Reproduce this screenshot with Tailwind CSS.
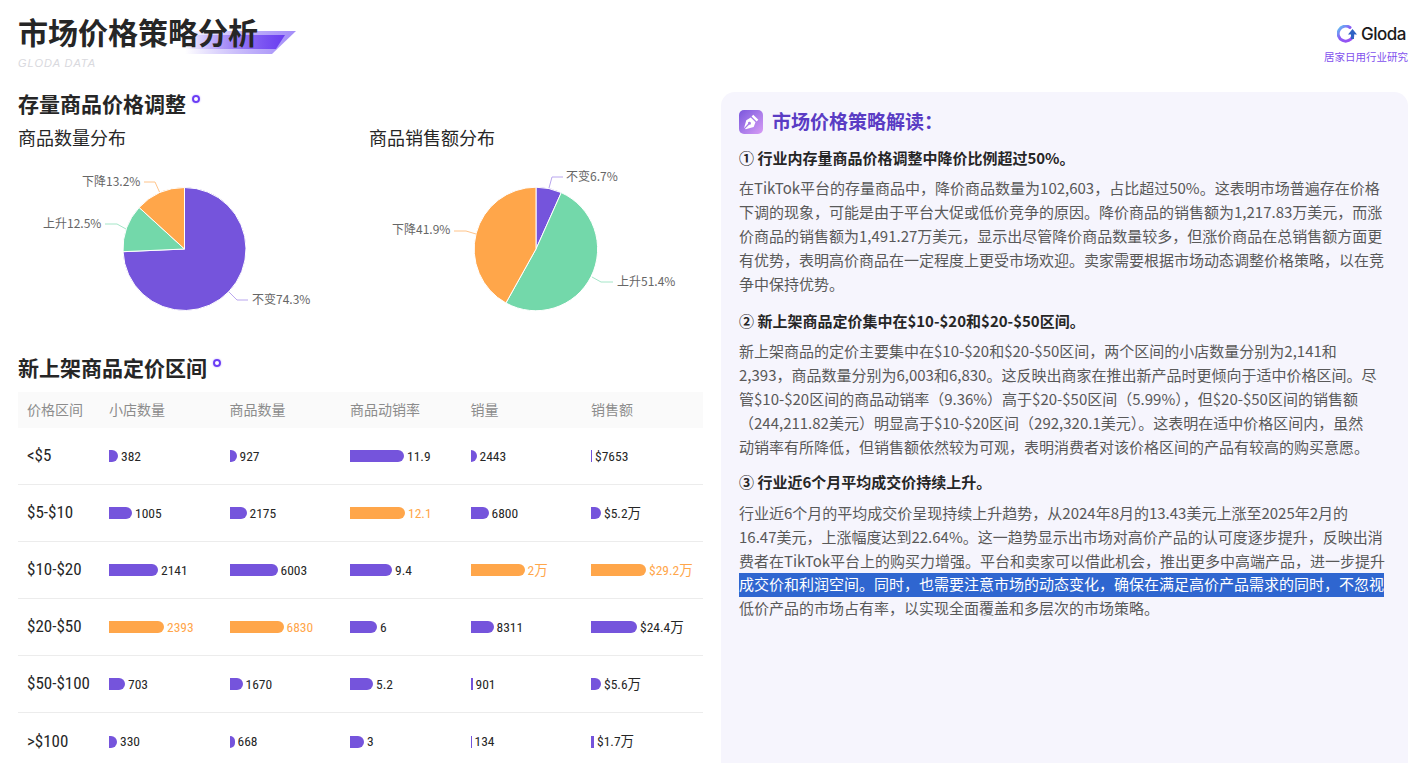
<!DOCTYPE html>
<html lang="zh-CN">
<head>
    <meta charset="UTF-8">
    <title>市场价格策略分析</title>
    <script src="https://cdn.jsdelivr.net/npm/@tailwindcss/browser@4"></script>
</head>
<body class="bg-white">
<div class="w-[1423px] h-[763px] overflow-hidden font-['Noto_Sans_CJK_SC','Noto_Sans',sans-serif] text-[#262626]">
    <!-- header -->
    <header class="h-[92px] pl-[18px] pr-[15px] flex justify-between">
        <div class="relative w-[300px]">
            <svg class="absolute left-[142px] top-[28px]" width="140" height="30" viewBox="160 28 140 30">
                <defs>
                    <linearGradient id="ribbonBack" x1="0" x2="1" y1="0" y2="0">
                        <stop offset="0" stop-color="#7b5cf5" stop-opacity="0"/>
                        <stop offset="1" stop-color="#a48df8"/>
                    </linearGradient>
                    <linearGradient id="ribbonFront" x1="0" x2="1" y1="0" y2="0">
                        <stop offset="0" stop-color="#6a3df0" stop-opacity="0"/>
                        <stop offset="1" stop-color="#6a3df0"/>
                    </linearGradient>
                </defs>
                <polygon points="185,31 296,31 272,54 185,54" fill="url(#ribbonBack)"/>
                <polygon points="185,35 285,35 276,49 185,49" fill="url(#ribbonFront)"/>
            </svg>
            <h1 class="relative pt-[12px] text-[30px] leading-[38px] font-bold tracking-normal">市场价格策略分析</h1>
            <p class="relative mt-[5px] text-[11px] leading-[16px] italic tracking-[0.9px] text-[#d9d9de] font-['Liberation_Sans',sans-serif]">GLODA DATA</p>
        </div>
        <div class="pt-[23px] flex flex-col items-end">
            <div class="flex items-center gap-[4px] h-[24px] pr-[2px]">
                <svg width="20" height="20" viewBox="0 0 20 20">
                    <defs>
                        <linearGradient id="logoRing" x1="0" x2="1" y1="0" y2="1">
                            <stop offset="0" stop-color="#5cc8f0"/>
                            <stop offset="0.45" stop-color="#8a5cf6"/>
                            <stop offset="1" stop-color="#9b4df0"/>
                        </linearGradient>
                    </defs>
                    <path d="M13 2.500A7.500 7.500 0 1 0 15.800 11" fill="none" stroke="url(#logoRing)" stroke-width="3" stroke-linecap="round"/>
                    <path d="M15.500 4L11 9.500h3v4.500h3V9.500h3z" fill="#2f62c4"/>
                </svg>
                <span class="font-['Inter',sans-serif] text-[17px] font-medium tracking-[-0.5px] text-[#1a1a1a]">Gloda</span>
            </div>
            <p class="mt-[2px] text-[10.5px] leading-[16px] text-[#7f50ee]">居家日用行业研究</p>
        </div>
    </header>

    <main class="flex gap-[18px]">
        <!-- left column -->
        <section class="w-[685px] ml-[18px] shrink-0">
            <div class="flex items-start gap-[6px] h-[24px]">
                <h2 class="-mt-px text-[21px] leading-[24px] font-bold">存量商品价格调整</h2>
                <span class="mt-[3px] size-[8px] rounded-full border-2 border-[#6b3df5] shadow-[0_0_2px_#b9a6fb]"></span>
            </div>
            <div class="flex">
                <div class="w-[351px]">
                    <h3 class="mt-[9px] text-[18px] leading-[24px]">商品数量分布</h3>
                    <svg class="mt-[6px] block" width="351" height="185" viewBox="18 155 351 185" font-size="12" fill="#666">
                        <path d="M184.500 249L184.500 187.500A61.500 61.500 0 1 1 123.060 251.700Z" fill="#7554dc" stroke="#fff"/>
                        <path d="M184.500 249L123.060 251.700A61.500 61.500 0 0 1 139.140 207.480Z" fill="#73d8aa" stroke="#fff"/>
                        <path d="M184.500 249L139.140 207.480A61.500 61.500 0 0 1 184.500 187.500Z" fill="#ffa64a" stroke="#fff"/>
                        <polyline points="144,182 155,182 159.500,192" fill="none" stroke="#ffc48a"/>
                        <polyline points="105,224 117,224 126,229" fill="none" stroke="#a5e6c8"/>
                        <polyline points="229,292 237,300 248,300" fill="none" stroke="#b9a6ee"/>
                        <text x="82" y="186">下降13.2%</text>
                        <text x="43" y="228">上升12.5%</text>
                        <text x="252" y="304">不变74.3%</text>
                    </svg>
                </div>
                <div class="w-[334px]">
                    <h3 class="mt-[9px] text-[18px] leading-[24px]">商品销售额分布</h3>
                    <svg class="mt-[6px] block" width="334" height="185" viewBox="369 155 334 185" font-size="12" fill="#666">
                        <path d="M536 249L536 187.200A61.800 61.800 0 0 1 561.250 192.600Z" fill="#7554dc" stroke="#fff"/>
                        <path d="M536 249L561.250 192.600A61.800 61.800 0 1 1 505.900 303Z" fill="#73d8aa" stroke="#fff"/>
                        <path d="M536 249L505.900 303A61.800 61.800 0 0 1 536 187.200Z" fill="#ffa64a" stroke="#fff"/>
                        <polyline points="563,177 552,177 549,188" fill="none" stroke="#b9a6ee"/>
                        <polyline points="454,231 466,231 476,234" fill="none" stroke="#ffc48a"/>
                        <polyline points="592,277 601,282 613,282" fill="none" stroke="#a5e6c8"/>
                        <text x="566" y="181">不变6.7%</text>
                        <text x="392" y="234">下降41.9%</text>
                        <text x="617" y="286">上升51.4%</text>
                    </svg>
                </div>
            </div>

            <div class="mt-[16px] flex items-start gap-[6px] h-[24px]">
                <h2 class="-mt-px text-[21px] leading-[24px] font-bold">新上架商品定价区间</h2>
                <span class="mt-[3px] size-[8px] rounded-full border-2 border-[#6b3df5] shadow-[0_0_2px_#b9a6fb]"></span>
            </div>

            <!-- price table -->
            <div class="mt-[12px] text-[13.5px] font-['Roboto_Condensed','Noto_Sans_CJK_SC',sans-serif] font-normal">
                <div class="grid grid-cols-[91px_repeat(4,120.5px)_1fr] h-[36px] pb-[2px] items-center bg-[#fafafa] text-[14px] text-[#8c8c8c] font-['Noto_Sans_CJK_SC',sans-serif]">
                    <div class="pl-[9px]">价格区间</div><div>小店数量</div><div>商品数量</div><div>商品动销率</div><div>销量</div><div>销售额</div>
                </div>
                <div class="grid grid-cols-[91px_repeat(4,120.5px)_1fr] h-[57px] items-center border-b border-[#ececec]">
                    <div class="pl-[9px] text-[17px]">&lt;$5</div>
                    <div class="flex items-center gap-[3px]"><span class="w-[9px] h-[12px] rounded-r-full bg-[#7554dc]"></span>382</div>
                    <div class="flex items-center gap-[3px]"><span class="w-[7px] h-[12px] rounded-r-full bg-[#7554dc]"></span>927</div>
                    <div class="flex items-center gap-[3px]"><span class="w-[54px] h-[12px] rounded-r-full bg-[#7554dc]"></span>11.9</div>
                    <div class="flex items-center gap-[3px]"><span class="w-[6px] h-[12px] rounded-r-full bg-[#7554dc]"></span>2443</div>
                    <div class="flex items-center gap-[3px]"><span class="w-[1px] h-[12px] bg-[#7554dc]"></span>$7653</div>
                </div>
                <div class="grid grid-cols-[91px_repeat(4,120.5px)_1fr] h-[57px] items-center border-b border-[#ececec]">
                    <div class="pl-[9px] text-[17px]">$5-$10</div>
                    <div class="flex items-center gap-[3px]"><span class="w-[23px] h-[12px] rounded-r-full bg-[#7554dc]"></span>1005</div>
                    <div class="flex items-center gap-[3px]"><span class="w-[17px] h-[12px] rounded-r-full bg-[#7554dc]"></span>2175</div>
                    <div class="flex items-center gap-[3px] text-[#ffa64a]"><span class="w-[55px] h-[12px] rounded-r-full bg-[#ffa64a]"></span>12.1</div>
                    <div class="flex items-center gap-[3px]"><span class="w-[18px] h-[12px] rounded-r-full bg-[#7554dc]"></span>6800</div>
                    <div class="flex items-center gap-[3px]"><span class="w-[10px] h-[12px] rounded-r-full bg-[#7554dc]"></span>$5.2万</div>
                </div>
                <div class="grid grid-cols-[91px_repeat(4,120.5px)_1fr] h-[57px] items-center border-b border-[#ececec]">
                    <div class="pl-[9px] text-[17px]">$10-$20</div>
                    <div class="flex items-center gap-[3px]"><span class="w-[49px] h-[12px] rounded-r-full bg-[#7554dc]"></span>2141</div>
                    <div class="flex items-center gap-[3px]"><span class="w-[48px] h-[12px] rounded-r-full bg-[#7554dc]"></span>6003</div>
                    <div class="flex items-center gap-[3px]"><span class="w-[42px] h-[12px] rounded-r-full bg-[#7554dc]"></span>9.4</div>
                    <div class="flex items-center gap-[3px] text-[#ffa64a]"><span class="w-[54px] h-[12px] rounded-r-full bg-[#ffa64a]"></span>2万</div>
                    <div class="flex items-center gap-[3px] text-[#ffa64a]"><span class="w-[55px] h-[12px] rounded-r-full bg-[#ffa64a]"></span>$29.2万</div>
                </div>
                <div class="grid grid-cols-[91px_repeat(4,120.5px)_1fr] h-[57px] items-center border-b border-[#ececec]">
                    <div class="pl-[9px] text-[17px]">$20-$50</div>
                    <div class="flex items-center gap-[3px] text-[#ffa64a]"><span class="w-[55px] h-[12px] rounded-r-full bg-[#ffa64a]"></span>2393</div>
                    <div class="flex items-center gap-[3px] text-[#ffa64a]"><span class="w-[54px] h-[12px] rounded-r-full bg-[#ffa64a]"></span>6830</div>
                    <div class="flex items-center gap-[3px]"><span class="w-[27px] h-[12px] rounded-r-full bg-[#7554dc]"></span>6</div>
                    <div class="flex items-center gap-[3px]"><span class="w-[23px] h-[12px] rounded-r-full bg-[#7554dc]"></span>8311</div>
                    <div class="flex items-center gap-[3px]"><span class="w-[46px] h-[12px] rounded-r-full bg-[#7554dc]"></span>$24.4万</div>
                </div>
                <div class="grid grid-cols-[91px_repeat(4,120.5px)_1fr] h-[57px] items-center border-b border-[#ececec]">
                    <div class="pl-[9px] text-[17px]">$50-$100</div>
                    <div class="flex items-center gap-[3px]"><span class="w-[16px] h-[12px] rounded-r-full bg-[#7554dc]"></span>703</div>
                    <div class="flex items-center gap-[3px]"><span class="w-[13px] h-[12px] rounded-r-full bg-[#7554dc]"></span>1670</div>
                    <div class="flex items-center gap-[3px]"><span class="w-[23px] h-[12px] rounded-r-full bg-[#7554dc]"></span>5.2</div>
                    <div class="flex items-center gap-[3px]"><span class="w-[2px] h-[12px] bg-[#7554dc]"></span>901</div>
                    <div class="flex items-center gap-[3px]"><span class="w-[10px] h-[12px] rounded-r-full bg-[#7554dc]"></span>$5.6万</div>
                </div>
                <div class="grid grid-cols-[91px_repeat(4,120.5px)_1fr] h-[57px] items-center">
                    <div class="pl-[9px] text-[17px]">&gt;$100</div>
                    <div class="flex items-center gap-[3px]"><span class="w-[8px] h-[12px] rounded-r-full bg-[#7554dc]"></span>330</div>
                    <div class="flex items-center gap-[3px]"><span class="w-[5px] h-[12px] rounded-r-full bg-[#7554dc]"></span>668</div>
                    <div class="flex items-center gap-[3px]"><span class="w-[14px] h-[12px] rounded-r-full bg-[#7554dc]"></span>3</div>
                    <div class="flex items-center gap-[3px]"><span class="w-[1px] h-[12px] bg-[#7554dc]"></span>134</div>
                    <div class="flex items-center gap-[3px]"><span class="w-[3px] h-[12px] bg-[#7554dc]"></span>$1.7万</div>
                </div>
            </div>
        </section>

        <!-- right panel -->
        <aside class="w-[687px] h-[671px] shrink-0 bg-[#f6f5fd] rounded-t-[14px] pt-[18px] pl-[18px] pr-[24px]">
            <div class="flex items-center gap-[9px] h-[24px]">
                <span class="size-[24px] rounded-[5px] bg-gradient-to-br from-[#7a55dc] to-[#d99cf5] flex items-center justify-center">
                    <svg width="18" height="18" viewBox="0 0 16 16">
                        <path d="M10 1.500l4.500 4.500-1.500 1.500-4.500-4.500z" fill="#fff"/>
                        <path d="M7.800 4l4.200 4.200-1.600 4.300-7.200 2-.5-.5 3.600-3.600a1.300 1.300 0 1 0-.9-.9L1.800 13.600l2-7.200z" fill="#fff"/>
                    </svg>
                </span>
                <h2 class="pb-[2px] text-[19px] leading-[24px] font-bold text-[#5a3cc4]">市场价格策略解读：</h2>
            </div>
            <h4 class="mt-[12px] text-[15px] leading-[24px] font-bold">① 行业内存量商品价格调整中降价比例超过50%。</h4>
            <p class="mt-[6px] text-[15px] leading-[24px] text-[#595959] whitespace-nowrap">在TikTok平台的存量商品中，降价商品数量为102,603，占比超过50%。这表明市场普遍存在价格<br>下调的现象，可能是由于平台大促或低价竞争的原因。降价商品的销售额为1,217.83万美元，而涨<br>价商品的销售额为1,491.27万美元，显示出尽管降价商品数量较多，但涨价商品在总销售额方面更<br>有优势，表明高价商品在一定程度上更受市场欢迎。卖家需要根据市场动态调整价格策略，以在竞<br>争中保持优势。</p>
            <h4 class="mt-[13px] text-[15px] leading-[24px] font-bold">② 新上架商品定价集中在$10-$20和$20-$50区间。</h4>
            <p class="mt-[6px] text-[15px] leading-[24px] text-[#595959] whitespace-nowrap">新上架商品的定价主要集中在$10-$20和$20-$50区间，两个区间的小店数量分别为2,141和<br>2,393，商品数量分别为6,003和6,830。这反映出商家在推出新产品时更倾向于适中价格区间。尽<br>管$10-$20区间的商品动销率（9.36%）高于$20-$50区间（5.99%），但$20-$50区间的销售额<br>（244,211.82美元）明显高于$10-$20区间（292,320.1美元）。这表明在适中价格区间内，虽然<br>动销率有所降低，但销售额依然较为可观，表明消费者对该价格区间的产品有较高的购买意愿。</p>
            <h4 class="mt-[11px] text-[15px] leading-[24px] font-bold">③ 行业近6个月平均成交价持续上升。</h4>
            <p class="mt-[7px] text-[15px] leading-[24px] text-[#595959] whitespace-nowrap">行业近6个月的平均成交价呈现持续上升趋势，从2024年8月的13.43美元上涨至2025年2月的<br>16.47美元，上涨幅度达到22.64%。这一趋势显示出市场对高价产品的认可度逐步提升，反映出消<br>费者在TikTok平台上的购买力增强。平台和卖家可以借此机会，推出更多中高端产品，进一步提升<br><span class="block -mb-px h-[24px] w-[645px] leading-[22px] bg-[#2f66d0] text-white">成交价和利润空间。同时，也需要注意市场的动态变化，确保在满足高价产品需求的同时，不忽视</span>低价产品的市场占有率，以实现全面覆盖和多层次的市场策略。</p>
        </aside>
    </main>
</div>
</body>
</html>
